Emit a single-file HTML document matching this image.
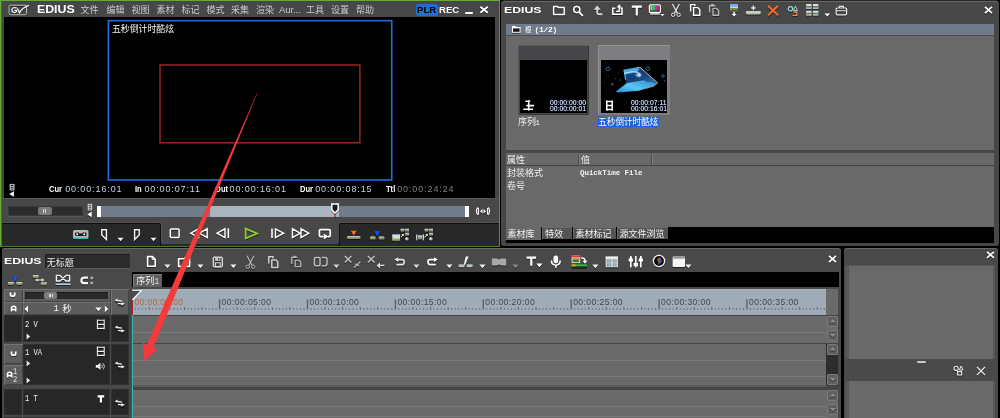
<!DOCTYPE html>
<html lang="zh">
<head>
<meta charset="utf-8">
<title>EDIUS</title>
<style>
html,body{margin:0;padding:0;background:#000;}
body{width:1000px;height:418px;position:relative;overflow:hidden;
 font-family:"Liberation Sans","Noto Sans CJK SC",sans-serif;font-size:11px;color:#e8e8e8;}
#root{position:absolute;left:0;top:0;width:1000px;height:418px;overflow:hidden;will-change:transform;}
.a{position:absolute;}
.t{position:absolute;white-space:nowrap;line-height:1;}
svg{position:absolute;overflow:visible;}
svg:not(.nf){filter:drop-shadow(0 1px 0 rgba(0,0,0,.5));}
/* ---------- player window ---------- */
#pl{left:0;top:0;width:500px;height:247px;background:#64ab36;}
#pl .frame{left:2px;top:1px;width:497px;height:245px;background:#474747;}
#pl .view{left:4px;top:17px;width:491px;height:181px;background:#000;}
#pl .sl{left:2px;top:198px;width:497px;height:25px;background:#484848;box-shadow:inset 0 1px 0 #565656;}
#pl .bt{left:2px;top:223px;width:497px;height:23px;background:#282828;}
.menu{top:5.6px;font-size:9px;color:#cacaca;}
.tc{top:184.7px;font-size:9px;color:#c9d3e6;letter-spacing:.88px;}
.tcl{top:185px;font-size:8.8px;color:#fff;font-weight:bold;transform:scaleX(.86);transform-origin:0 0;}
/* ---------- bin window ---------- */
#bin{left:0;top:0;}
#bin .bg{left:501px;top:1px;width:497.5px;height:245px;background:#474747;border-radius:4px 4px 3px 3px;box-shadow:inset 0 1px 0 #666, 0 -1px 0 #282828;}
.b9{font-size:9px;color:#f0f0f0;}
/* ---------- timeline window ---------- */
#tl{left:0;top:0;}
#tl .bg{left:2px;top:248.2px;width:839.2px;height:170px;background:#494949;border-radius:3px 3px 0 0;box-shadow:inset 0 1px 0 #686868;}
.hb{background:#5d5d5d;box-shadow:inset 1px 1px 0 #737373, inset -1px -1px 0 #454545;}
.tn{background:#272727;box-shadow:inset 0 0 0 1px #303030;}
.mono{font-family:"Liberation Mono",monospace;}
/* ---------- right panel ---------- */
#rp{left:0;top:0;}
#rp .bg{left:843.6px;top:248.4px;width:154.8px;height:170px;background:#494949;border-radius:3px 3px 0 0;box-shadow:inset 0 1px 0 #686868;}
</style>
</head>
<body>
<div id="root">

<!-- ================= PLAYER WINDOW ================= -->
<div id="pl" class="a">
 <div class="a" style="left:1px;top:1px;width:1px;height:245px;background:#4e6a38"></div>
 <div class="a" style="left:0;top:246px;width:500px;height:1px;background:#3f801f"></div>
 <div class="a" style="left:499px;top:1px;width:1px;height:246px;background:#4b9626"></div>
 <div class="a frame"></div>
 <div class="a view"></div>
 <div class="a sl"></div>
 <div class="a bt"></div>
 <div class="a" style="left:2px;top:222px;width:497px;height:1px;background:#525252"></div>
 <div class="a" style="left:160.6px;top:222px;width:178px;height:21.8px;background:#484848;border-radius:0 0 3.5px 3.5px;box-shadow:inset 1px 0 0 #565656"></div>
 <div class="a" style="left:2px;top:223px;width:159px;height:5px;background:#484848"></div>
 <div class="a" style="left:2px;top:223px;width:158.6px;height:23px;background:#282828;border-radius:0 3px 0 0;box-shadow:inset 0 1px 0 #0e0e0e, inset -1px 0 0 #111"></div>
 <div class="a" style="left:338px;top:223px;width:161px;height:5px;background:#484848"></div>
 <div class="a" style="left:338.6px;top:223px;width:160.4px;height:23px;background:#282828;border-radius:3px 0 0 0;box-shadow:inset 0 1px 0 #0e0e0e, inset 1px 0 0 #111"></div>

 <!-- title bar -->
 <svg style="left:7.8px;top:3.5px" width="22" height="12" viewBox="0 0 22 12">
  <rect x="1" y="1.2" width="17.5" height="9.6" rx="1.5" fill="none" stroke="#bdbdbd" stroke-width="1"/>
  <path d="M8.6 4.2 C7.6 3.2 4.2 3.2 3.8 6 C3.6 8.8 7.4 9 8.4 7.6 L8.4 6.4 L6.4 6.4" fill="none" stroke="#f2f2f2" stroke-width="1.3"/>
  <path d="M9.4 4.4 L11.4 8.8 C13.4 5.4 17 2.6 21 1.4" fill="none" stroke="#f2f2f2" stroke-width="1.3"/>
 </svg>
 <span class="t" style="left:36.6px;top:4.7px;font-size:10.1px;font-weight:bold;color:#fff;transform:scaleX(1.22);transform-origin:0 0">EDIUS</span>
 <span class="t menu" style="left:80.5px">文件</span>
 <span class="t menu" style="left:106.5px">编辑</span>
 <span class="t menu" style="left:131.5px">视图</span>
 <span class="t menu" style="left:156.5px">素材</span>
 <span class="t menu" style="left:181.5px">标记</span>
 <span class="t menu" style="left:206.5px">模式</span>
 <span class="t menu" style="left:231px">采集</span>
 <span class="t menu" style="left:256px">渲染</span>
 <span class="t menu" style="left:279px;top:5.1px;font-size:9.5px;letter-spacing:-.1px">Aur...</span>
 <span class="t menu" style="left:306px">工具</span>
 <span class="t menu" style="left:331px">设置</span>
 <span class="t menu" style="left:356px">帮助</span>
 <div class="a" style="left:416px;top:4px;width:22px;height:12px;background:#1d6be0;border-radius:2.5px"></div>
 <span class="t" style="left:417.3px;top:6.8px;font-size:8.2px;font-weight:bold;color:#000;transform:scaleX(1.17);transform-origin:0 0">PLR</span>
 <span class="t" style="left:439.3px;top:6.8px;font-size:8.2px;font-weight:bold;color:#fff;transform:scaleX(1.17);transform-origin:0 0">REC</span>
 <div class="a" style="left:465px;top:11.5px;width:7.5px;height:2.2px;background:#fff;border-radius:1px"></div>
 <svg style="left:479px;top:5px" width="10" height="9" viewBox="0 0 10 9"><path d="M1.4 1.8 L8.8 7.8 M8.8 1.8 L1.4 7.8" stroke="#fff" stroke-width="1.8" fill="none"/></svg>

 <!-- viewer overlays -->
 <svg class="nf" style="left:0;top:0" width="500" height="200" viewBox="0 0 500 200"><rect x="108.35" y="20.65" width="283.4" height="159.3" fill="none" stroke="#1f6fe4" stroke-width="1.6"/><rect x="160" y="64.95" width="199.9" height="77.85" fill="none" stroke="#962424" stroke-width="1.5"/></svg>
 <span class="t" style="left:112px;top:24.5px;font-size:8.9px;color:#f4f4f4">五秒倒计时酷炫</span>

 <!-- timecodes -->
 <svg style="left:7.6px;top:182.6px" width="8" height="15" viewBox="0 0 8 15">
  <path d="M2.2 1 V7.2 M6 1 V7.2 M2.2 1.4 H6 M2.2 3.4 H6 M2.2 5.2 H6 M2.2 7 H6" stroke="#e0e0e0" stroke-width=".9" fill="none"/>
  <path d="M5.9 8.2 V13.8 L1.2 11 Z" fill="#fff"/>
 </svg>
 <span class="t tcl" style="left:49.4px">Cur</span><span class="t tc" style="left:65.2px">00:00:16:01</span>
 <span class="t tcl" style="left:135px">In</span><span class="t tc" style="left:144.4px">00:00:07:11</span>
 <span class="t tcl" style="left:214.8px">Out</span><span class="t tc" style="left:229.6px">00:00:16:01</span>
 <span class="t tcl" style="left:299.8px">Dur</span><span class="t tc" style="left:315.2px">00:00:08:15</span>
 <span class="t tcl" style="left:386.4px">Ttl</span><span class="t tc" style="left:397.2px;color:#808080">00:00:24:24</span>

 <!-- slider row -->
 <div class="a" style="left:7.6px;top:205.6px;width:75.4px;height:10px;background:#2c2c2c;box-shadow:inset 0 0 0 1px #3a3a3a, 0 1px 0 #5a5a5a"></div>
 <div class="a" style="left:37.6px;top:206.6px;width:14.4px;height:8px;background:#7a7a7a;border-radius:2px"></div>
 <div class="a" style="left:43px;top:208.6px;width:1px;height:4px;background:#ddd"></div>
 <div class="a" style="left:45px;top:208.6px;width:1px;height:4px;background:#ddd"></div>
 <svg style="left:86.2px;top:203.2px" width="8" height="16" viewBox="0 0 8 16">
  <path d="M2.2 .8 V7.2 M5.6 .8 V7.2 M2.2 1.4 H5.6 M2.2 3.3 H5.6 M2.2 5.2 H5.6 M2.2 7 H5.6" stroke="#e4e4e4" stroke-width=".9" fill="none"/>
  <path d="M5.7 8.6 V14.2 L1.4 11.4 Z" fill="#fff"/>
 </svg>
 <div class="a" style="left:97px;top:206px;width:371px;height:11px;background:#717c8a"></div>
 <div class="a" style="left:209.6px;top:206px;width:129px;height:11px;background:#a9b4c1"></div>
 <div class="a" style="left:97px;top:206px;width:3.5px;height:11px;background:#fff"></div>
 <div class="a" style="left:465px;top:206px;width:3.5px;height:11px;background:#fff"></div>
 <svg style="left:330px;top:203px" width="10" height="15" viewBox="0 0 10 15">
  <path d="M1.8 .9 H8.2 V6.6 L5 10.2 L1.8 6.6 Z" fill="#1a1a1a" stroke="#fff" stroke-width="1.5"/>
  <path d="M5 10 V14" stroke="#d03030" stroke-width="1"/>
 </svg>
 <svg style="left:475px;top:206px" width="16" height="11" viewBox="0 0 16 11">
  <path d="M3 1.5 C1 3 1 7 3 9 M13 1.5 C15 3 15 7 13 9" stroke="#eee" stroke-width="1.4" fill="none"/>
  <path d="M3.5 2 V8.5 M12.5 2 V8.5" stroke="#eee" stroke-width="1"/>
  <path d="M5 5.2 L7.5 3 V7.4 Z M11 5.2 L8.5 3 V7.4 Z" fill="#fff"/>
 </svg>

 <!-- transport -->
 <svg style="left:72px;top:229px" width="18" height="12" viewBox="0 0 18 12">
  <rect x="1" y="1" width="15.5" height="8.6" rx="1.6" fill="#b8b8b8"/>
  <rect x="3" y="3.4" width="11.5" height="3.6" rx="1.2" fill="#1c1c1c"/>
  <rect x="7" y="3" width="3.4" height="1.4" fill="#b8b8b8"/><circle cx="5.2" cy="5.3" r="1" fill="#f4f4f4"/><circle cx="12.2" cy="5.3" r="1" fill="#f4f4f4"/>
  <rect x="1.4" y="8.6" width="14.8" height="1.5" fill="#17c4b0"/>
 </svg>
 <svg style="left:100px;top:228px" width="9" height="14" viewBox="0 0 9 14"><path d="M1.8 1.7 H6.4 V11.6 L1.8 7 Z" fill="none" stroke="#f4f4f4" stroke-width="1.4" stroke-linejoin="miter"/></svg>
 <svg style="left:117px;top:237px" width="7" height="5" viewBox="0 0 7 5"><path d="M.5 .8 H6.5 L3.5 4.2 Z" fill="#f4f4f4"/></svg>
 <svg style="left:132px;top:228px" width="9" height="14" viewBox="0 0 9 14"><path d="M7.2 1.7 H2.6 V11.6 L7.2 7 Z" fill="none" stroke="#f4f4f4" stroke-width="1.4" stroke-linejoin="miter"/></svg>
 <svg style="left:150px;top:237px" width="7" height="5" viewBox="0 0 7 5"><path d="M.5 .8 H6.5 L3.5 4.2 Z" fill="#f4f4f4"/></svg>

 <svg style="left:168px;top:227px" width="14" height="13" viewBox="0 0 14 13"><rect x="2.3" y="1.9" width="8.8" height="8.6" rx="1" fill="none" stroke="#fff" stroke-width="1.5"/></svg>
 <svg style="left:189px;top:227px" width="20" height="13" viewBox="0 0 20 13"><path d="M9.6 1.8 V10.6 L1.8 6.2 Z M18.2 1.8 V10.6 L10.4 6.2 Z" fill="none" stroke="#fff" stroke-width="1.4" stroke-linejoin="miter"/></svg>
 <svg style="left:215px;top:227px" width="16" height="13" viewBox="0 0 16 13"><path d="M10 1.8 V10.6 L2 6.2 Z" fill="none" stroke="#fff" stroke-width="1.4"/><path d="M13.3 1.4 V11" stroke="#fff" stroke-width="1.6"/></svg>
 <svg style="left:243px;top:226px" width="17" height="15" viewBox="0 0 17 15"><path d="M2.6 2.6 V12.4 L14 7.5 Z" fill="none" stroke="#8fd12c" stroke-width="1.7" stroke-linejoin="miter"/></svg>
 <svg style="left:269px;top:227px" width="17" height="13" viewBox="0 0 17 13"><path d="M6.4 1.8 V10.6 L14.6 6.2 Z" fill="none" stroke="#fff" stroke-width="1.4"/><path d="M3 1.4 V11" stroke="#fff" stroke-width="1.6"/></svg>
 <svg style="left:290px;top:227px" width="21" height="13" viewBox="0 0 21 13"><path d="M2.4 1.8 V10.6 L10.2 6.2 Z M11 1.8 V10.6 L18.8 6.2 Z" fill="none" stroke="#fff" stroke-width="1.4" stroke-linejoin="miter"/></svg>
 <svg style="left:317px;top:227px" width="16" height="14" viewBox="0 0 16 14">
  <path d="M6.6 9.6 H3.6 Q2.4 9.6 2.4 8.4 V3.8 Q2.4 2.6 3.6 2.6 H12 Q13.2 2.6 13.2 3.8 V8.4 Q13.2 9.6 12 9.6 H11" fill="none" stroke="#fff" stroke-width="1.7"/>
  <path d="M6.8 6.8 L11.6 9.6 L6.8 12.4 Z" fill="#fff"/>
 </svg>

 <svg style="left:346px;top:229px" width="16" height="12" viewBox="0 0 16 12">
  <path d="M4.9 1.8 H10.7 L7.8 6.8 Z" fill="#f2701e"/>
  <rect x=".8" y="7" width="13.8" height="3" rx="1.5" fill="#8e9058"/>
  <rect x="1.2" y="7" width="13" height="1.3" rx=".65" fill="#b4c4d4"/>
 </svg>
 <svg style="left:369px;top:229px" width="17" height="12" viewBox="0 0 17 12">
  <rect x=".8" y="7.4" width="6" height="3" rx="1.5" fill="#8e9058"/><rect x="1.2" y="7.4" width="5.2" height="1.2" rx=".6" fill="#b4c4d4"/>
  <rect x="9.4" y="7.4" width="6.2" height="3" rx="1.5" fill="#8e9058"/><rect x="9.8" y="7.4" width="5.4" height="1.2" rx=".6" fill="#b4c4d4"/>
  <path d="M5.5 2.2 H11.1 L8.3 7.6 Z" fill="#0a58ff"/>
 </svg>
 <svg style="left:392px;top:228px" width="18" height="14" viewBox="0 0 18 14">
  <rect x=".4" y="6.6" width="7.6" height="5.8" fill="#e4e6dc"/><rect x=".4" y="6.6" width="7.6" height="2.2" fill="#c4dcf4"/><rect x=".4" y="10.4" width="7.6" height="2" fill="#a4a25c"/>
  <g><rect x="8.6" y=".8" width="3.8" height="2.8" fill="#8c9050"/><rect x="8.6" y=".8" width="3.8" height="1.4" fill="#a8cce8"/><rect x="13.2" y=".8" width="3.8" height="2.8" fill="#8c9050"/><rect x="13.2" y=".8" width="3.8" height="1.4" fill="#a8cce8"/><rect x="13.2" y="4.8" width="3.8" height="2.8" fill="#8c9050"/><rect x="13.2" y="4.8" width="3.8" height="1.4" fill="#a8cce8"/></g>
  <path d="M9 9.2 L11 6.6 M9.8 6.4 H11.4 V8" stroke="#e4e4e4" stroke-width="1" fill="none"/>
  <path d="M13 10.8 H16.6 M14.8 9 V12.6" stroke="#e8e8e8" stroke-width="1.2"/>
 </svg>
 <svg style="left:415px;top:228px" width="19" height="14" viewBox="0 0 19 14">
  <rect x="2.8" y="7.4" width="4.6" height="4" fill="#8c9050"/><rect x="2.8" y="7.4" width="4.6" height="2" fill="#a8cce8"/>
  <path d="M2 6.4 Q.8 9.4 2 12.4 M8.2 6.4 Q9.4 9.4 8.2 12.4" stroke="#e4e4e4" stroke-width="1.1" fill="none"/>
  <g><rect x="9.6" y=".8" width="3.8" height="2.8" fill="#8c9050"/><rect x="9.6" y=".8" width="3.8" height="1.4" fill="#a8cce8"/><rect x="14.2" y=".8" width="3.8" height="2.8" fill="#8c9050"/><rect x="14.2" y=".8" width="3.8" height="1.4" fill="#a8cce8"/><rect x="14.2" y="4.8" width="3.8" height="2.8" fill="#8c9050"/><rect x="14.2" y="4.8" width="3.8" height="1.4" fill="#a8cce8"/></g>
  <path d="M10 9.2 L12 6.6 M10.8 6.4 H12.4 V8" stroke="#e4e4e4" stroke-width="1" fill="none"/>
  <path d="M14 10.8 H17.6 M15.8 9 V12.6" stroke="#e8e8e8" stroke-width="1.2"/>
 </svg>
</div>

<!-- ================= BIN WINDOW ================= -->
<div id="bin" class="a">
 <div class="a bg"></div>
 <!-- toolbar -->
 <span class="t" style="left:504.2px;top:5.1px;font-size:9.8px;font-weight:bold;color:#fff;transform:scaleX(1.25);transform-origin:0 0">EDIUS</span>
 <svg style="left:552px;top:4px" width="14" height="12" viewBox="0 0 14 12"><path d="M1.6 2.4 H5.4 L6.4 3.6 H12.2 V10.4 H1.6 Z" fill="none" stroke="#fff" stroke-width="1.5" stroke-linejoin="round"/></svg>
 <svg style="left:572px;top:5px" width="12" height="12" viewBox="0 0 12 12"><circle cx="4.8" cy="4.6" r="3.1" fill="none" stroke="#fff" stroke-width="1.5"/><path d="M7 7 L10.8 10.8" stroke="#fff" stroke-width="1.9"/></svg>
 <svg style="left:593px;top:5px" width="11" height="11" viewBox="0 0 11 11"><path d="M4.2 3 V7.4 Q4.2 9.2 6 9.2 H9.4" fill="none" stroke="#d4d4d4" stroke-width="1.9"/><path d="M.6 4.8 L4.2 .6 L7.8 4.8 Z" fill="#d4d4d4"/></svg>
 <svg style="left:611px;top:3px" width="13" height="13" viewBox="0 0 13 13"><path d="M4.4 5.2 H1.8 V11.2 H11 V5.2 H9.6" fill="none" stroke="#fff" stroke-width="1.5"/><path d="M5 8.4 H8.2 V3.6" fill="none" stroke="#fff" stroke-width="1.4"/><path d="M5.8 4.4 L8.2 1.2 L10.6 4.4 Z" fill="#fff"/></svg>
 <svg style="left:631px;top:5px" width="12" height="11" viewBox="0 0 12 11"><path d="M.8 1.6 H10.8 M5.8 1.6 V10.4" stroke="#fff" stroke-width="2.1" fill="none"/></svg>
 <svg style="left:648px;top:4px" width="18" height="14" viewBox="0 0 18 14">
  <rect x="1.4" y=".8" width="11" height="7.6" rx="1" fill="#2a2a2a" stroke="#fff" stroke-width="1.2"/>
  <rect x="2.4" y="1.6" width="1.8" height="4.8" fill="#d8d020"/><rect x="4.2" y="1.6" width="1.8" height="4.8" fill="#20c0d0"/><rect x="6" y="1.6" width="1.8" height="4.8" fill="#30c040"/><rect x="7.8" y="1.6" width="1.8" height="4.8" fill="#d030c0"/><rect x="9.6" y="1.6" width="1.8" height="4.8" fill="#d03030"/>
  <rect x="2.2" y="9.2" width="9.6" height="1.4" fill="#eee"/>
  <path d="M12.4 10 H16.4 L14.4 12.4 Z" fill="#fff"/>
 </svg>
 <svg style="left:669px;top:3px" width="14" height="15" viewBox="0 0 14 15"><path d="M3.4 1 L8.4 10.4 M10.4 1 L5.4 10.4" stroke="#e8e8e8" stroke-width="1.2" fill="none"/><circle cx="4.2" cy="11.8" r="1.7" fill="none" stroke="#e8e8e8" stroke-width="1"/><circle cx="9.6" cy="11.8" r="1.7" fill="none" stroke="#e8e8e8" stroke-width="1"/></svg>
 <svg style="left:689px;top:3px" width="13" height="14" viewBox="0 0 13 14"><path d="M1.6 8.6 V1.6 H5.8 V3.2" fill="none" stroke="#fff" stroke-width="1.4"/><path d="M4.6 4.6 H8.8 L10.8 6.8 V12.2 H4.6 Z" fill="none" stroke="#fff" stroke-width="1.4"/></svg>
 <svg style="left:708px;top:3px" width="13" height="14" viewBox="0 0 13 14"><path d="M1.6 9.4 V2.8 H7.4" fill="none" stroke="#b4b4b4" stroke-width="1.4"/><rect x="3" y="1" width="3" height="2.2" rx=".6" fill="#b4b4b4"/><path d="M5 5.4 H8.6 L10.6 7.4 V12.2 H5 Z" fill="none" stroke="#b4b4b4" stroke-width="1.4" stroke-linejoin="round"/></svg>
 <svg style="left:729px;top:3px" width="11" height="15" viewBox="0 0 11 15">
  <rect x="1.2" y="1.2" width="7.8" height="7.2" fill="#d8e8f6"/><rect x="1.2" y="1.2" width="7.8" height="2.4" fill="#6aa6ee"/><rect x="1.2" y="4.8" width="7.8" height="2.2" fill="#7c8a44"/><rect x="1.2" y="7" width="7.8" height="1.4" fill="#4c5a30"/>
  <path d="M5.1 9.6 V12" stroke="#fff" stroke-width="1.3"/><path d="M2.6 11 H7.6 L5.1 13.6 Z" fill="#fff"/><path d="M3.4 10.2 L5.1 8.8 L6.8 10.2 Z" fill="#fff"/>
 </svg>
 <svg style="left:745px;top:5px" width="17" height="11" viewBox="0 0 17 11">
  <path d="M8.4 .6 V5.2 M6.2 3 H10.6" stroke="#fff" stroke-width="1.3"/>
  <rect x=".8" y="6.2" width="15" height="3.4" rx="1.7" fill="#b8c0a0"/><rect x=".8" y="6.2" width="15" height="1.4" rx=".7" fill="#cfe0f0"/>
 </svg>
 <svg style="left:767px;top:5px" width="12" height="11" viewBox="0 0 12 11"><path d="M1 .8 L11 10.4 M11 .8 L1 10.4" stroke="#f46e28" stroke-width="2" fill="none"/></svg>
 <svg style="left:787px;top:5px" width="12" height="12" viewBox="0 0 12 12"><circle cx="3.4" cy="3.8" r="2.2" fill="none" stroke="#a8dede" stroke-width="1.2"/><path d="M6.4 5.4 L8.4 1 L10.4 5.4 Z" fill="none" stroke="#a8dede" stroke-width="1"/><path d="M6.4 7 H9.8 V10.4 H5.6" fill="none" stroke="#f08a50" stroke-width="1.3"/></svg>
 <svg style="left:805px;top:3px" width="15" height="14" viewBox="0 0 15 14">
  <g fill="#cfe0ee"><rect x="1.2" y="1" width="5.4" height="4.8"/><rect x="8" y="1" width="5.4" height="4.8"/><rect x="1.2" y="7.8" width="5.4" height="4.8"/><rect x="8" y="7.8" width="5.4" height="4.8"/></g>
  <g fill="#6a7a34"><rect x="1.2" y="3" width="5.4" height="1.6"/><rect x="8" y="3" width="5.4" height="1.6"/><rect x="1.2" y="9.8" width="5.4" height="1.6"/><rect x="8" y="9.8" width="5.4" height="1.6"/></g>
 </svg>
 <svg style="left:824px;top:13px" width="7" height="4" viewBox="0 0 7 4"><path d="M.4 .4 H6.2 L3.3 3.6 Z" fill="#fff"/></svg>
 <svg style="left:835px;top:5px" width="13" height="11" viewBox="0 0 13 11"><rect x="1.2" y="3" width="10.4" height="6.8" rx="1" fill="none" stroke="#e8e8e8" stroke-width="1.2"/><path d="M4.4 3 V1.4 H8.4 V3 M1.2 5.8 H11.6" fill="none" stroke="#e8e8e8" stroke-width="1.1"/></svg>
 <svg style="left:984px;top:5.5px" width="9" height="8" viewBox="0 0 9 8"><path d="M1 .8 L8 7.2 M8 .8 L1 7.2" stroke="#fff" stroke-width="1.7" fill="none"/></svg>

 <!-- folder header -->
 <div class="a" style="left:506px;top:24px;width:488px;height:11px;background:#6f7b8a"></div>
 <div class="a" style="left:506px;top:35px;width:488px;height:1px;background:#4b4d51"></div>
 <svg style="left:511px;top:25px" width="11" height="9" viewBox="0 0 11 9"><path d="M1 1 H4.4 L5.2 2 H9.6 V7.8 H1 Z" fill="#fff"/><rect x="2" y="3.4" width="6.6" height="3.4" fill="#1a1a1a"/></svg>
 <span class="t" style="left:525px;top:27px;font-size:6.5px;color:#fff">根</span>
 <span class="t" style="left:534.6px;top:26px;font-size:8px;color:#fff;font-family:'Liberation Mono',monospace;font-weight:bold;letter-spacing:-.35px">(1/2)</span>

 <!-- clip area -->
 <div class="a" style="left:506px;top:36px;width:488px;height:114px;background:#69696a"></div>
 <!-- thumb 1 -->
 <div class="a" style="left:518px;top:45px;width:71px;height:70px;background:#46464a;box-shadow:inset 0 1px 0 #5c5c60, inset 1px 0 0 #545458, inset -1px 0 0 #38383a, inset 0 -1px 0 #3a3a3c"></div>
 <div class="a" style="left:520px;top:60px;width:67px;height:53px;background:#000"></div>
 <svg class="nf" style="left:523px;top:100px" width="12" height="12" viewBox="0 0 12 12"><path d="M5.7 .2 V10.6" stroke="#fff" stroke-width="1.5"/><path d="M2.4 1.3 H7.2 M3.4 5.6 H11 M.3 9.3 H10" stroke="#fff" stroke-width="1.6" fill="none"/></svg>
 <span class="t" style="left:550.4px;top:98.5px;font-size:8px;color:#e6ecff;transform:scaleX(.852);transform-origin:0 0;text-shadow:0 0 1px #4a6ab0">00:00:00:00</span>
 <span class="t" style="left:550.4px;top:104.7px;font-size:8px;color:#e6ecff;transform:scaleX(.852);transform-origin:0 0;text-shadow:0 0 1px #4a6ab0">00:00:00:01</span>
 <span class="t b9" style="left:518px;top:118px">序列<span style="font-family:'Liberation Mono',monospace;font-size:8px;margin-left:-.8px;letter-spacing:-1px">1</span></span>
 <!-- thumb 2 -->
 <div class="a" style="left:597.5px;top:45px;width:72.5px;height:69.5px;background:#7e7e82;box-shadow:inset 1px 1px 0 #909094"></div>
 <div class="a" style="left:600.5px;top:60px;width:66.5px;height:52.5px;background:#000"></div>
 <svg class="nf" style="left:600.5px;top:60px" width="67" height="53" viewBox="0 0 67 53">
  <defs>
   <linearGradient id="cg" x1="0" y1="1" x2="1" y2="0"><stop offset="0" stop-color="#2a8cd8"/><stop offset=".45" stop-color="#58c6f6"/><stop offset="1" stop-color="#2a86cc"/></linearGradient>
   <linearGradient id="cg2" x1="0" y1="0" x2="1" y2="1"><stop offset="0" stop-color="#1a5a9c"/><stop offset=".5" stop-color="#123c74"/><stop offset="1" stop-color="#2a7cc0"/></linearGradient>
   <radialGradient id="gl" cx=".5" cy=".5" r=".5"><stop offset="0" stop-color="#fff" stop-opacity=".95"/><stop offset=".5" stop-color="#bfe6ff" stop-opacity=".5"/><stop offset="1" stop-color="#5ab0f0" stop-opacity="0"/></radialGradient>
   <filter id="bl" x="-20%" y="-20%" width="140%" height="140%"><feGaussianBlur stdDeviation=".55"/></filter>
  </defs>
  <g filter="url(#bl)">
   <polygon points="22.5,9.7 35.7,7.2 39.4,7.8 56.5,22.9 43.3,20.8 25.3,23.6 24.4,19" fill="url(#cg2)"/>
   <polygon points="14.9,31.6 25.3,23.6 43.3,20.8 56.5,22.9 53,25.9 37.8,30.8 17,32.6" fill="url(#cg)"/>
   <polygon points="22.6,9.8 35.5,7.4 38.4,9.2 36,12 24.2,14.6" fill="#52b4f0" opacity=".9"/><path d="M23,10 L24.6,19.6" stroke="#6cc8fa" stroke-width="1.1" opacity=".9"/>
   <path d="M23.4,13.6 Q30,10.6 36.8,12.4 Q40,14 38.6,16.6" stroke="#dff2ff" stroke-width="1.1" fill="none" opacity=".85"/>
   <ellipse cx="37.6" cy="15" rx="4.4" ry="3.2" fill="url(#gl)"/>
   <path d="M25.3,23.6 L43.3,20.8" stroke="#9adcff" stroke-width=".7" opacity=".8"/>
  </g>
  <path d="M36,7.2 L39.6,7.8 L56.8,23" stroke="#f2c8a8" stroke-width=".9" fill="none" opacity=".95"/>
  <path d="M56.8,23.2 L53,26 L45,28.6" stroke="#e8a070" stroke-width=".7" fill="none" opacity=".8"/>
  <g fill="none" stroke="#4878a8" stroke-width=".8"><ellipse cx="6.9" cy="9" rx="2.1" ry="1.6"/><ellipse cx="46.8" cy="8.8" rx="2" ry="1.7"/><circle cx="62" cy="16" r="1.3"/><circle cx="11.4" cy="24.3" r="1"/></g>
  <g fill="#3a5a8c"><circle cx="7" cy="16" r=".6"/><circle cx="14.5" cy="18.5" r=".6"/><circle cx="19" cy="20" r=".7"/><circle cx="4" cy="22" r=".5"/><circle cx="63.5" cy="21" r=".7"/><circle cx="17" cy="13" r=".5"/><circle cx="52" cy="27.6" r=".5"/></g>
 </svg>
 <svg style="left:604.6px;top:100px" width="10" height="12" viewBox="0 0 10 12"><path d="M1.8 .4 V10.8 M7.2 .4 V10.8" stroke="#fff" stroke-width="1.5"/><path d="M1.8 1.6 H7.2 M1.8 5.6 H7.2 M1.8 9.6 H7.2" stroke="#fff" stroke-width="1.5"/></svg>
 <span class="t" style="left:631.2px;top:98.5px;font-size:8px;color:#e6ecff;transform:scaleX(.852);transform-origin:0 0;text-shadow:0 0 1px #4a6ab0">00:00:07:11</span>
 <span class="t" style="left:631.2px;top:104.7px;font-size:8px;color:#e6ecff;transform:scaleX(.852);transform-origin:0 0;text-shadow:0 0 1px #4a6ab0">00:00:16:01</span>
 <div class="a" style="left:598px;top:117px;width:61px;height:10px;background:#1c62d8"></div>
 <span class="t b9" style="left:598.2px;top:117.8px;font-size:8.6px;color:#fff">五秒倒计时酷炫</span>

 <!-- properties -->
 <div class="a" style="left:506px;top:153px;width:488px;height:74px;background:#69696a"></div>
 <div class="a" style="left:506px;top:165px;width:488px;height:1px;background:#454545"></div>
 <div class="a" style="left:578px;top:154px;width:1px;height:11px;background:#4c4c4c"></div><div class="a" style="left:579px;top:154px;width:1px;height:11px;background:#808080"></div>
 <div class="a" style="left:651px;top:154px;width:1px;height:11px;background:#4c4c4c"></div><div class="a" style="left:652px;top:154px;width:1px;height:11px;background:#808080"></div>
 <span class="t b9" style="left:507px;top:155.5px">属性</span>
 <span class="t b9" style="left:581px;top:155.5px">值</span>
 <span class="t b9" style="left:507px;top:168.5px">封装格式</span>
 <span class="t" style="left:580px;top:169.5px;font-size:7.6px;color:#f2f2f2;font-family:'Liberation Mono',monospace;font-weight:bold;letter-spacing:-.1px">QuickTime File</span>
 <span class="t b9" style="left:507px;top:181.5px">卷号</span>

 <!-- tabs -->
 <div class="a" style="left:506px;top:227px;width:488px;height:16px;background:#000"></div>
 <div class="a" style="left:506px;top:227px;width:35px;height:13px;background:#696969"></div>
 <div class="a" style="left:542px;top:227px;width:30px;height:12px;background:#545454;box-shadow:inset 0 1px 0 #6a6a6a, inset 1px 0 0 #666"></div>
 <div class="a" style="left:573px;top:227px;width:42.5px;height:12px;background:#545454;box-shadow:inset 0 1px 0 #6a6a6a, inset 1px 0 0 #666"></div>
 <div class="a" style="left:617px;top:227px;width:51px;height:12px;background:#545454;box-shadow:inset 0 1px 0 #6a6a6a, inset 1px 0 0 #666"></div>
 <span class="t b9" style="left:507.5px;top:229.5px">素材库</span>
 <span class="t b9" style="left:545px;top:229.5px">特效</span>
 <span class="t b9" style="left:575.5px;top:229.5px">素材标记</span>
 <span class="t b9" style="left:619.5px;top:229.5px">源文件浏览</span>
</div>

<!-- ================= TIMELINE WINDOW ================= -->
<div id="tl" class="a">
 <div class="a bg"></div>
 <span class="t" style="left:4.4px;top:256px;font-size:9.8px;font-weight:bold;color:#fff;transform:scaleX(1.25);transform-origin:0 0">EDIUS</span>
 <div class="a" style="left:45px;top:254px;width:85.4px;height:13.6px;background:#2c2c2c;box-shadow:inset 1px 1px 0 #1e1e1e, 0 1px 0 #5a5a5a"></div>
 <span class="t" style="left:46.8px;top:259px;font-size:9px;color:#f0f0f0">无标题</span>
 <!-- main toolbar -->
 <svg style="left:146px;top:255px" width="11" height="13" viewBox="0 0 11 13"><path d="M1.6 1.6 H6.4 L9.2 4.4 V11.2 H1.6 Z" fill="none" stroke="#fff" stroke-width="1.6" stroke-linejoin="round"/><path d="M6.2 1.8 V4.6 H9" fill="none" stroke="#fff" stroke-width="1"/></svg>
 <svg style="left:164px;top:263.6px" width="7" height="5" viewBox="0 0 7 5"><path d="M.3 .5 H6.5 L3.4 4.3 Z" fill="#f0f0f0"/></svg>
 <svg style="left:176.5px;top:255.5px" width="15" height="12" viewBox="0 0 15 12"><path d="M1.6 2.8 H7.4 L8.4 1.6 H11.4 L12.6 2.8 V10.4 H1.6 Z" fill="none" stroke="#fff" stroke-width="1.6" stroke-linejoin="round"/></svg>
 <svg style="left:197px;top:263.6px" width="7" height="5" viewBox="0 0 7 5"><path d="M.3 .5 H6.5 L3.4 4.3 Z" fill="#f0f0f0"/></svg>
 <svg style="left:211.5px;top:255.5px" width="12" height="12" viewBox="0 0 12 12"><rect x="1.3" y="1.2" width="9" height="9.6" rx="1" fill="none" stroke="#d2d2d2" stroke-width="1.5"/><rect x="3.2" y="1.2" width="5.2" height="3.6" fill="#d2d2d2"/><rect x="5.9" y="1.9" width="1.4" height="2.2" fill="#4a4a4a"/><rect x="3.4" y="6.8" width="4.8" height="4" fill="none" stroke="#d2d2d2" stroke-width="1.1"/></svg>
 <svg style="left:229.8px;top:263.6px" width="7" height="5" viewBox="0 0 7 5"><path d="M.3 .5 H6.5 L3.4 4.3 Z" fill="#f0f0f0"/></svg>
 <svg style="left:243.5px;top:254.5px" width="13" height="15" viewBox="0 0 13 15"><path d="M3 .8 L8 10.4 M10 .8 L5 10.4" stroke="#b4b4b4" stroke-width="1.2" fill="none"/><circle cx="3.8" cy="11.8" r="1.7" fill="none" stroke="#b4b4b4" stroke-width="1"/><circle cx="9.2" cy="11.8" r="1.7" fill="none" stroke="#b4b4b4" stroke-width="1"/></svg>
 <svg style="left:267px;top:254.5px" width="13" height="14" viewBox="0 0 13 14"><path d="M1.8 8.6 V1.8 H6 V3.4" fill="none" stroke="#d0d0d0" stroke-width="1.5"/><path d="M4.8 5 H9 L10.8 7 V12.4 H4.8 Z" fill="none" stroke="#d0d0d0" stroke-width="1.5" stroke-linejoin="round"/></svg>
 <svg style="left:290px;top:254.5px" width="13" height="13" viewBox="0 0 13 13"><path d="M1.8 9 V2.4 H7.6" fill="none" stroke="#b0b0b0" stroke-width="1.4"/><rect x="3.2" y=".8" width="3" height="2" fill="#b0b0b0"/><path d="M5.2 5.4 H9 L10.8 7.2 V11.6 H5.2 Z" fill="none" stroke="#b0b0b0" stroke-width="1.4" stroke-linejoin="round"/></svg>
 <svg style="left:312.5px;top:256px" width="16" height="11" viewBox="0 0 16 11"><rect x="1.4" y="1.4" width="5.6" height="8.4" rx="1.2" fill="none" stroke="#bcbcbc" stroke-width="1.5"/><path d="M8.6 1.4 H12 Q14 1.4 14 3.4 V7.8 Q14 9.8 12 9.8 H8.6" fill="none" stroke="#bcbcbc" stroke-width="1.5"/></svg>
 <svg style="left:333px;top:263.6px" width="7" height="5" viewBox="0 0 7 5"><path d="M.3 .5 H6.5 L3.4 4.3 Z" fill="#d0d0d0"/></svg>
 <svg style="left:343.5px;top:254.5px" width="18" height="14" viewBox="0 0 18 14"><path d="M.8 .9 L7.4 7.6 M7.4 .9 L.8 7.6" stroke="#c4c4c4" stroke-width="1.4" fill="none"/><path d="M10 12.6 L16.4 6.6 M11.2 9 L15.2 10.6" stroke="#c0c0c0" stroke-width="1.3" fill="none"/></svg>
 <svg style="left:366.5px;top:254.5px" width="18" height="14" viewBox="0 0 18 14"><path d="M.8 .9 L7.6 7.6 M7.6 .9 L.8 7.6" stroke="#c4c4c4" stroke-width="1.4" fill="none"/><path d="M12 10.4 H17.4" stroke="#e0e0e0" stroke-width="1.4"/><path d="M9.6 10.4 L13 7.4 V13.4 Z" fill="#e0e0e0"/></svg>
 <svg style="left:394px;top:256.5px" width="12" height="10" viewBox="0 0 12 10"><path d="M3.6 2.6 H8.2 Q10.2 2.6 10.2 4.8 Q10.2 7.6 8.2 7.6 H2.4" fill="none" stroke="#e4e4e4" stroke-width="1.6"/><path d="M.4 2.6 L4.2 .2 V5 Z" fill="#e4e4e4"/></svg>
 <svg style="left:413px;top:263.6px" width="7" height="5" viewBox="0 0 7 5"><path d="M.3 .5 H6.5 L3.4 4.3 Z" fill="#d8d8d8"/></svg>
 <svg style="left:427px;top:256.5px" width="12" height="10" viewBox="0 0 12 10"><path d="M7.6 2.6 H3 Q1 2.6 1 4.8 Q1 7.6 3 7.6 H8.8" fill="none" stroke="#fff" stroke-width="1.7"/><path d="M10.8 2.6 L7 .2 V5 Z" fill="#fff"/></svg>
 <svg style="left:446px;top:263.6px" width="7" height="5" viewBox="0 0 7 5"><path d="M.3 .5 H6.5 L3.4 4.3 Z" fill="#f0f0f0"/></svg>
 <svg style="left:458px;top:255.5px" width="16" height="12" viewBox="0 0 16 12"><path d="M7.8 .4 H10.6 L7.2 8.8 H5.8 Z" fill="#fff"/><rect x=".6" y="8.6" width="6" height="2.6" rx="1" fill="#c0c4a8"/><rect x="8.6" y="8.6" width="6" height="2.6" rx="1" fill="#c0c4a8"/><rect x=".6" y="8.6" width="6" height="1.1" fill="#a8c4e0"/><rect x="8.6" y="8.6" width="6" height="1.1" fill="#a8c4e0"/></svg>
 <svg style="left:479px;top:263.6px" width="7" height="5" viewBox="0 0 7 5"><path d="M.3 .5 H6.5 L3.4 4.3 Z" fill="#f0f0f0"/></svg>
 <svg style="left:491px;top:258px" width="16" height="8" viewBox="0 0 16 8"><path d="M.8 .6 H5.8 L8 1.6 L10.2 .6 H15.2 V7.4 H10.2 L8 6.4 L5.8 7.4 H.8 Z" fill="#a8a8a8"/></svg>
 <svg style="left:512px;top:263.6px" width="7" height="5" viewBox="0 0 7 5"><path d="M.3 .5 H6.5 L3.4 4.3 Z" fill="#8a8a8a"/></svg>
 <svg style="left:526px;top:256px" width="11" height="10" viewBox="0 0 11 10"><path d="M.6 1.7 H10 M5.3 1.7 V9.8" stroke="#fff" stroke-width="2.2" fill="none"/></svg>
 <svg style="left:535.6px;top:263px" width="7" height="5" viewBox="0 0 7 5"><path d="M.3 .5 H6.5 L3.4 4.3 Z" fill="#fff"/></svg>
 <svg style="left:549.5px;top:254.5px" width="12" height="14" viewBox="0 0 12 14"><rect x="3.4" y=".6" width="4.8" height="7.8" rx="2.4" fill="#fff"/><path d="M1.4 5.6 Q1.4 10.2 5.8 10.2 Q10.2 10.2 10.2 5.6" fill="none" stroke="#fff" stroke-width="1.6"/><path d="M5.8 10.2 V12.8" stroke="#fff" stroke-width="1.7"/></svg>
 <svg style="left:570.5px;top:254.5px" width="17" height="14" viewBox="0 0 17 14">
  <rect x=".6" y=".6" width="8.6" height="7.6" fill="#f0f0f0"/><rect x=".6" y=".6" width="8.6" height="1.9" fill="#e23434"/><rect x="1.5" y="3.4" width="6.8" height="3.9" fill="#5c6a2c"/><rect x="1.5" y="3.4" width="6.8" height="1.2" fill="#a8b05c"/>
  <path d="M10.2 3.2 Q14 2.6 14 6" fill="none" stroke="#fff" stroke-width="1.6"/><path d="M11.4 5.8 H16.4 L14 8.8 Z" fill="#fff"/>
  <rect x=".6" y="9.4" width="15.4" height="2" fill="#2cc43a"/><rect x=".6" y="9.4" width="4" height="2" fill="#f09a2c"/><rect x=".6" y="11.8" width="15.4" height="1.3" fill="#2a2a2a"/>
 </svg>
 <svg style="left:591.6px;top:263.6px" width="7" height="5" viewBox="0 0 7 5"><path d="M.3 .5 H6.5 L3.4 4.3 Z" fill="#f0f0f0"/></svg>
 <svg style="left:604.5px;top:255.5px" width="14" height="12" viewBox="0 0 14 12"><rect x=".6" y=".6" width="12.4" height="10.6" fill="#d4d4d4"/><rect x=".6" y=".6" width="12.4" height="1.8" fill="#f2f2f2"/>
  <g fill="#7898b8"><rect x="2" y="3.6" width="4" height="2.8"/><rect x="7.6" y="3.6" width="4" height="2.8"/><rect x="2" y="7.4" width="4" height="2.8"/><rect x="7.6" y="7.4" width="4" height="2.8"/></g>
  <g fill="#d8d090"><rect x="3.2" y="4.4" width="1.6" height="1.2"/><rect x="8.8" y="4.4" width="1.6" height="1.2"/><rect x="3.2" y="8.2" width="1.6" height="1.2"/><rect x="8.8" y="8.2" width="1.6" height="1.2"/></g></svg>
 <svg style="left:628px;top:254.5px" width="16" height="14" viewBox="0 0 16 14"><path d="M2.8 1 V12.6 M7.8 1 V12.6 M12.8 1 V12.6" stroke="#fff" stroke-width="1.6"/><path d="M.6 4.4 L2.8 1 L5 4.4 V6.4 H.6 Z M5.6 8 H10 V11.2 H5.6 Z M10.6 4.4 L12.8 1 L15 4.4 V6.4 H10.6 Z" fill="#fff"/></svg>
 <svg style="left:652px;top:254px" width="14" height="14" viewBox="0 0 14 14"><circle cx="7" cy="7" r="5.6" fill="#0a0a0a" stroke="#f4f4f4" stroke-width="1.3"/><path d="M6.6 11 L5.4 5.4 L6.6 3.2 Z" fill="#30d848"/><path d="M6.6 11 L6.6 3.2 L7.8 3.4 Z" fill="#f03838"/><path d="M6.6 11 L7.8 3.4 L9 5 Z" fill="#f040e0"/><path d="M6.6 11 L9 5 L9.8 7.6 Z" fill="#4060ff"/></svg>
 <svg style="left:671.5px;top:255.5px" width="14" height="12" viewBox="0 0 14 12"><rect x=".6" y=".6" width="12.4" height="10.4" rx="1" fill="#f6f6f6"/><rect x=".6" y=".6" width="12.4" height="2.2" rx="1" fill="#9a9a9a"/></svg>
 <svg style="left:685.2px;top:263.6px" width="7" height="5" viewBox="0 0 7 5"><path d="M.3 .5 H6.5 L3.4 4.3 Z" fill="#f0f0f0"/></svg>
 <svg style="left:827.5px;top:255px" width="9" height="8" viewBox="0 0 9 8"><path d="M1 .8 L8 7.2 M8 .8 L1 7.2" stroke="#fff" stroke-width="1.7" fill="none"/></svg>

 <!-- mode buttons -->
 <svg style="left:7.2px;top:275.6px" width="17" height="11" viewBox="0 0 17 11"><path d="M5.4 .6 H10.8 L8.1 5.6 Z" fill="#0a58ff"/><rect x=".6" y="6" width="6.6" height="3" rx="1.4" fill="#8e9058"/><rect x="9" y="6" width="6.6" height="3" rx="1.4" fill="#8e9058"/><rect x="1" y="6" width="5.8" height="1.3" rx=".6" fill="#b4c8dc"/><rect x="9.4" y="6" width="5.8" height="1.3" rx=".6" fill="#b4c8dc"/></svg>
 <svg style="left:31.5px;top:274px" width="16" height="12" viewBox="0 0 16 12"><rect x=".6" y="1" width="6.4" height="3" rx="1.4" fill="#8e9058"/><rect x="1" y="1" width="5.6" height="1.3" rx=".6" fill="#b4c8dc"/><rect x="8.6" y="8.2" width="6.4" height="3" rx="1.4" fill="#8e9058"/><rect x="9" y="8.2" width="5.6" height="1.3" rx=".6" fill="#b4c8dc"/><path d="M4.4 6 H11" stroke="#e8e8e8" stroke-width="1.1"/><path d="M3 6 L5.6 4.2 V7.8 Z M12.4 6 L9.8 4.2 V7.8 Z" fill="#e8e8e8"/></svg>
 <svg style="left:54.5px;top:274px" width="17" height="12" viewBox="0 0 17 12"><path d="M1.4 1.4 H5 L11 7 H14.6 V1.4 H11 L5 7 H1.4 Z" fill="none" stroke="#f0f0f0" stroke-width="1.4" stroke-linejoin="round"/><rect x=".6" y="9.4" width="15" height="1.6" fill="#a8d0e8"/></svg>
 <svg style="left:79.5px;top:276px" width="15" height="9" viewBox="0 0 15 9"><path d="M8 1.6 H4.4 Q1.4 1.6 1.4 4.4 Q1.4 7.2 4.4 7.2 H8" fill="none" stroke="#f4f4f4" stroke-width="2.2"/><path d="M10 2 H13.6 M10 7 H13.6 M11.8 .4 V3.6 M11.8 5.4 V8.6" stroke="#c8c8c8" stroke-width="1"/></svg>

 <!-- sequence tab strip -->
 <div class="a" style="left:131.5px;top:272px;width:707.5px;height:15.4px;background:#000"></div>
 <div class="a" style="left:133px;top:273.6px;width:29px;height:13.8px;background:#606060;box-shadow:inset 1px 1px 0 #7c7c7c"></div>
 <span class="t" style="left:136.2px;top:277.2px;font-size:9px;color:#f4f4f4">序列<span class="mono" style="font-size:8.6px;color:#cfd8e8">1</span></span>

 <!-- header control rows -->
 <div class="a hb" style="left:4px;top:289px;width:18.5px;height:12.6px"></div>
 <div class="a hb" style="left:4px;top:302px;width:18.5px;height:12.6px"></div>
 <div class="a hb" style="left:23px;top:289px;width:87.5px;height:12.6px"></div>
 <div class="a hb" style="left:23px;top:302px;width:87.5px;height:12.6px"></div>
 <div class="a hb" style="left:111px;top:289px;width:18px;height:25.6px"></div>
 <svg style="left:9.4px;top:292.4px" width="8" height="6" viewBox="0 0 8 6"><path d="M1.5 .6 V2.4 Q1.5 4.2 3.6 4.2 Q5.7 4.2 5.7 2.4 V.6" fill="none" stroke="#fff" stroke-width="1.8"/></svg>
 <svg style="left:9.6px;top:304.8px" width="8" height="7" viewBox="0 0 8 7"><path d="M1.5 6.4 V3 Q1.5 1.4 3.6 1.4 Q5.7 1.4 5.7 3 V6.4 M1.5 4.6 H5.7" fill="none" stroke="#fff" stroke-width="1.6"/></svg>
 <div class="a" style="left:25px;top:291.6px;width:82.6px;height:7.8px;background:#2a2a2a;box-shadow:inset 1px 1px 0 #1c1c1c"></div>
 <div class="a" style="left:44.4px;top:292px;width:12.6px;height:6.8px;background:#7c7c7c;border-radius:1.8px"></div>
 <div class="a" style="left:48.8px;top:293.6px;width:.9px;height:3.6px;background:#e0e0e0"></div><div class="a" style="left:50.3px;top:293.6px;width:.9px;height:3.6px;background:#e0e0e0"></div><div class="a" style="left:51.8px;top:293.6px;width:.9px;height:3.6px;background:#e0e0e0"></div>
 <svg style="left:24px;top:304.8px" width="5" height="8" viewBox="0 0 5 8"><path d="M4 .6 V7.2 L.6 3.9 Z" fill="#fff"/></svg>
 <span class="t mono" style="left:53.6px;top:305.4px;font-size:9px;color:#f4f4f4">1</span>
 <span class="t" style="left:62.6px;top:305.2px;font-size:9px;color:#f4f4f4">秒</span>
 <svg style="left:94.6px;top:306.6px" width="7" height="5" viewBox="0 0 7 5"><path d="M.3 .5 H6.5 L3.4 4.3 Z" fill="#fff"/></svg>
 <svg style="left:104px;top:304.6px" width="5" height="8" viewBox="0 0 5 8"><path d="M.8 .6 V7.2 L4.2 3.9 Z" fill="#fff"/></svg>
 <svg style="left:114px;top:298.0px" width="12" height="9" viewBox="0 0 12 9"><g fill="#2c2c2c" stroke="#2c2c2c" transform="translate(0,1)"><path d="M.6 2.3 L3.6 .4 L3.5 3.5 Z M10.9 5.7 L7.6 4.3 L7.4 7.6 Z" stroke="none"/><path d="M3.2 2.3 L7.9 3.1 M4 5.3 L8 5.9" stroke-width="1.3" fill="none"/></g><g fill="#f0f0f0" stroke="#f0f0f0"><path d="M.6 2.3 L3.6 .4 L3.5 3.5 Z M10.9 5.7 L7.6 4.3 L7.4 7.6 Z" stroke="none"/><path d="M3.2 2.3 L7.9 3.1 M4 5.3 L8 5.9" stroke-width="1.2" fill="none"/></g></svg>

 <!-- track headers -->
 <div class="a tn" style="left:4px;top:315.4px;width:18px;height:27px"></div>
 <div class="a tn" style="left:23.2px;top:315.4px;width:86.8px;height:27px"></div>
 <div class="a tn" style="left:111.4px;top:315.4px;width:18px;height:27px"></div>
 <span class="t mono" style="left:24.8px;top:320.4px;font-size:9.4px;color:#f0f0f0;transform:scaleX(.76);transform-origin:0 0">2 V</span>
 <svg style="left:95.8px;top:318.6px" width="10" height="11" viewBox="0 0 10 11"><path d="M1.4 .5 V10.2 M8.2 .5 V10.2 M1.4 1.3 H8.2 M1.4 5.35 H8.2 M1.4 9.4 H8.2" stroke="#f0f0f0" stroke-width="1.1" fill="none"/></svg> <svg style="left:26px;top:332.6px" width="5" height="7" viewBox="0 0 5 7"><path d="M.6 .4 V6.4 L4.2 3.4 Z" fill="#f4f4f4"/></svg> <svg style="left:114px;top:324.6px" width="12" height="9" viewBox="0 0 12 9"><g fill="#2c2c2c" stroke="#2c2c2c" transform="translate(0,1)"><path d="M.6 2.3 L3.6 .4 L3.5 3.5 Z M10.9 5.7 L7.6 4.3 L7.4 7.6 Z" stroke="none"/><path d="M3.2 2.3 L7.9 3.1 M4 5.3 L8 5.9" stroke-width="1.3" fill="none"/></g><g fill="#f0f0f0" stroke="#f0f0f0"><path d="M.6 2.3 L3.6 .4 L3.5 3.5 Z M10.9 5.7 L7.6 4.3 L7.4 7.6 Z" stroke="none"/><path d="M3.2 2.3 L7.9 3.1 M4 5.3 L8 5.9" stroke-width="1.2" fill="none"/></g></svg>

 <div class="a hb" style="left:4px;top:344px;width:18.5px;height:20.4px"></div>
 <div class="a hb" style="left:4px;top:364.8px;width:18.5px;height:20.4px"></div>
 <div class="a tn" style="left:23.2px;top:344px;width:86.8px;height:41px"></div>
 <div class="a tn" style="left:111.4px;top:344px;width:18px;height:41px"></div>
 <svg style="left:9.8px;top:351.2px" width="8" height="6" viewBox="0 0 8 6"><path d="M1.5 .6 V2.4 Q1.5 4.2 3.6 4.2 Q5.7 4.2 5.7 2.4 V.6" fill="none" stroke="#fff" stroke-width="1.8"/></svg>
 <svg style="left:5.6px;top:371px" width="8" height="7" viewBox="0 0 8 7"><path d="M1.5 6.4 V3 Q1.5 1.3 3.6 1.3 Q5.7 1.3 5.7 3 V6.4 M1.5 4.6 H5.7" fill="none" stroke="#fff" stroke-width="1.6"/></svg>
 <span class="t mono" style="left:13px;top:368.2px;font-size:9px;color:#e0e0e0;transform:scaleX(.78);transform-origin:0 0">1</span>
 
 <span class="t mono" style="left:13px;top:375.8px;font-size:9px;color:#e0e0e0;transform:scaleX(.78);transform-origin:0 0">2</span>
 <span class="t mono" style="left:24.8px;top:347.6px;font-size:9.4px;color:#f0f0f0;transform:scaleX(.76);transform-origin:0 0">1 VA</span>
 <svg style="left:95.8px;top:346.2px" width="10" height="11" viewBox="0 0 10 11"><path d="M1.4 .5 V10.2 M8.2 .5 V10.2 M1.4 1.3 H8.2 M1.4 5.35 H8.2 M1.4 9.4 H8.2" stroke="#f0f0f0" stroke-width="1.1" fill="none"/></svg> <svg style="left:26px;top:360.4px" width="5" height="7" viewBox="0 0 5 7"><path d="M.6 .4 V6.4 L4.2 3.4 Z" fill="#f4f4f4"/></svg> <svg style="left:26px;top:377.2px" width="5" height="7" viewBox="0 0 5 7"><path d="M.6 .4 V6.4 L4.2 3.4 Z" fill="#f4f4f4"/></svg> <svg style="left:114px;top:360.6px" width="12" height="9" viewBox="0 0 12 9"><g fill="#2c2c2c" stroke="#2c2c2c" transform="translate(0,1)"><path d="M.6 2.3 L3.6 .4 L3.5 3.5 Z M10.9 5.7 L7.6 4.3 L7.4 7.6 Z" stroke="none"/><path d="M3.2 2.3 L7.9 3.1 M4 5.3 L8 5.9" stroke-width="1.3" fill="none"/></g><g fill="#f0f0f0" stroke="#f0f0f0"><path d="M.6 2.3 L3.6 .4 L3.5 3.5 Z M10.9 5.7 L7.6 4.3 L7.4 7.6 Z" stroke="none"/><path d="M3.2 2.3 L7.9 3.1 M4 5.3 L8 5.9" stroke-width="1.2" fill="none"/></g></svg>
 <svg style="left:95px;top:362.4px" width="11" height="9" viewBox="0 0 11 9"><path d="M.8 3 H2.8 L5.4 .8 V8 L2.8 5.8 H.8 Z" fill="#f4f4f4"/><path d="M6.8 2.6 Q8 4.4 6.8 6.2 M8.4 1.4 Q10.4 4.4 8.4 7.4" stroke="#e0e0e0" stroke-width=".9" fill="none"/></svg>

 <div class="a tn" style="left:4px;top:389.4px;width:18px;height:25.8px"></div>
 <div class="a tn" style="left:23.2px;top:389.4px;width:86.8px;height:25.8px"></div>
 <div class="a tn" style="left:111.4px;top:389.4px;width:18px;height:25.8px"></div>
 <div class="a tn" style="left:4px;top:417px;width:18px;height:1px"></div><div class="a tn" style="left:23.2px;top:417px;width:86.8px;height:1px"></div><div class="a tn" style="left:111.4px;top:417px;width:18px;height:1px"></div>
 <span class="t mono" style="left:24.8px;top:393.6px;font-size:9.4px;color:#f0f0f0;transform:scaleX(.76);transform-origin:0 0">1 T</span>
 <svg style="left:96.8px;top:394.6px" width="8" height="8" viewBox="0 0 8 8"><path d="M.6 1.4 H7.2 M3.9 1.4 V7.4" stroke="#fff" stroke-width="2.2" fill="none"/></svg>
 <svg style="left:114px;top:398.6px" width="12" height="9" viewBox="0 0 12 9"><g fill="#2c2c2c" stroke="#2c2c2c" transform="translate(0,1)"><path d="M.6 2.3 L3.6 .4 L3.5 3.5 Z M10.9 5.7 L7.6 4.3 L7.4 7.6 Z" stroke="none"/><path d="M3.2 2.3 L7.9 3.1 M4 5.3 L8 5.9" stroke-width="1.3" fill="none"/></g><g fill="#f0f0f0" stroke="#f0f0f0"><path d="M.6 2.3 L3.6 .4 L3.5 3.5 Z M10.9 5.7 L7.6 4.3 L7.4 7.6 Z" stroke="none"/><path d="M3.2 2.3 L7.9 3.1 M4 5.3 L8 5.9" stroke-width="1.2" fill="none"/></g></svg>

 <!-- ruler -->
 <div class="a" style="left:131.6px;top:289px;width:706.4px;height:26.4px;background:#6a6a6a"></div>
 <div class="a" style="left:131.6px;top:289px;width:694.4px;height:25.6px;background:#9fabb7;box-shadow:inset 0 1px 0 #a9b4be"></div>
 <svg class="nf" style="left:131.6px;top:288.6px" width="12" height="12" viewBox="0 0 12 12"><path d="M0 0 H11 L0 11.6 Z" fill="#4c4c4c"/><path d="M.2 1.2 H9.6 L.4 11" fill="none" stroke="#fff" stroke-width="1.2"/></svg>
 <div class="a" style="left:131.6px;top:300.4px;width:1.2px;height:14.2px;background:#a02828"></div>
 <svg class="nf" style="left:0;top:0" width="1000" height="418" viewBox="0 0 1000 418" font-family="Liberation Sans, sans-serif"><rect x="134.72" y="308" width="1" height="1.8" fill="#6a727c"/><rect x="138.23" y="308" width="1" height="1.8" fill="#6a727c"/><rect x="141.75" y="308" width="1" height="1.8" fill="#6a727c"/><rect x="145.26" y="308" width="1" height="1.8" fill="#6a727c"/><rect x="148.78" y="307" width="1" height="3" fill="#5c636c"/><rect x="152.30" y="308" width="1" height="1.8" fill="#6a727c"/><rect x="155.81" y="308" width="1" height="1.8" fill="#6a727c"/><rect x="159.33" y="308" width="1" height="1.8" fill="#6a727c"/><rect x="162.84" y="308" width="1" height="1.8" fill="#6a727c"/><rect x="166.36" y="307" width="1" height="3" fill="#5c636c"/><rect x="169.88" y="308" width="1" height="1.8" fill="#6a727c"/><rect x="173.39" y="308" width="1" height="1.8" fill="#6a727c"/><rect x="176.91" y="308" width="1" height="1.8" fill="#6a727c"/><rect x="180.42" y="308" width="1" height="1.8" fill="#6a727c"/><rect x="183.94" y="307" width="1" height="3" fill="#5c636c"/><rect x="187.46" y="308" width="1" height="1.8" fill="#6a727c"/><rect x="190.97" y="308" width="1" height="1.8" fill="#6a727c"/><rect x="194.49" y="308" width="1" height="1.8" fill="#6a727c"/><rect x="198.00" y="308" width="1" height="1.8" fill="#6a727c"/><rect x="201.52" y="307" width="1" height="3" fill="#5c636c"/><rect x="205.04" y="308" width="1" height="1.8" fill="#6a727c"/><rect x="208.55" y="308" width="1" height="1.8" fill="#6a727c"/><rect x="212.07" y="308" width="1" height="1.8" fill="#6a727c"/><rect x="215.58" y="308" width="1" height="1.8" fill="#6a727c"/><rect x="218.95" y="299.3" width="1.3" height="10.2" fill="#5a5f66"/><rect x="222.62" y="308" width="1" height="1.8" fill="#6a727c"/><rect x="226.13" y="308" width="1" height="1.8" fill="#6a727c"/><rect x="229.65" y="308" width="1" height="1.8" fill="#6a727c"/><rect x="233.16" y="308" width="1" height="1.8" fill="#6a727c"/><rect x="236.68" y="307" width="1" height="3" fill="#5c636c"/><rect x="240.20" y="308" width="1" height="1.8" fill="#6a727c"/><rect x="243.71" y="308" width="1" height="1.8" fill="#6a727c"/><rect x="247.23" y="308" width="1" height="1.8" fill="#6a727c"/><rect x="250.74" y="308" width="1" height="1.8" fill="#6a727c"/><rect x="254.26" y="307" width="1" height="3" fill="#5c636c"/><rect x="257.78" y="308" width="1" height="1.8" fill="#6a727c"/><rect x="261.29" y="308" width="1" height="1.8" fill="#6a727c"/><rect x="264.81" y="308" width="1" height="1.8" fill="#6a727c"/><rect x="268.32" y="308" width="1" height="1.8" fill="#6a727c"/><rect x="271.84" y="307" width="1" height="3" fill="#5c636c"/><rect x="275.36" y="308" width="1" height="1.8" fill="#6a727c"/><rect x="278.87" y="308" width="1" height="1.8" fill="#6a727c"/><rect x="282.39" y="308" width="1" height="1.8" fill="#6a727c"/><rect x="285.90" y="308" width="1" height="1.8" fill="#6a727c"/><rect x="289.42" y="307" width="1" height="3" fill="#5c636c"/><rect x="292.94" y="308" width="1" height="1.8" fill="#6a727c"/><rect x="296.45" y="308" width="1" height="1.8" fill="#6a727c"/><rect x="299.97" y="308" width="1" height="1.8" fill="#6a727c"/><rect x="303.48" y="308" width="1" height="1.8" fill="#6a727c"/><rect x="306.85" y="299.3" width="1.3" height="10.2" fill="#5a5f66"/><rect x="310.52" y="308" width="1" height="1.8" fill="#6a727c"/><rect x="314.03" y="308" width="1" height="1.8" fill="#6a727c"/><rect x="317.55" y="308" width="1" height="1.8" fill="#6a727c"/><rect x="321.06" y="308" width="1" height="1.8" fill="#6a727c"/><rect x="324.58" y="307" width="1" height="3" fill="#5c636c"/><rect x="328.10" y="308" width="1" height="1.8" fill="#6a727c"/><rect x="331.61" y="308" width="1" height="1.8" fill="#6a727c"/><rect x="335.13" y="308" width="1" height="1.8" fill="#6a727c"/><rect x="338.64" y="308" width="1" height="1.8" fill="#6a727c"/><rect x="342.16" y="307" width="1" height="3" fill="#5c636c"/><rect x="345.68" y="308" width="1" height="1.8" fill="#6a727c"/><rect x="349.19" y="308" width="1" height="1.8" fill="#6a727c"/><rect x="352.71" y="308" width="1" height="1.8" fill="#6a727c"/><rect x="356.22" y="308" width="1" height="1.8" fill="#6a727c"/><rect x="359.74" y="307" width="1" height="3" fill="#5c636c"/><rect x="363.26" y="308" width="1" height="1.8" fill="#6a727c"/><rect x="366.77" y="308" width="1" height="1.8" fill="#6a727c"/><rect x="370.29" y="308" width="1" height="1.8" fill="#6a727c"/><rect x="373.80" y="308" width="1" height="1.8" fill="#6a727c"/><rect x="377.32" y="307" width="1" height="3" fill="#5c636c"/><rect x="380.84" y="308" width="1" height="1.8" fill="#6a727c"/><rect x="384.35" y="308" width="1" height="1.8" fill="#6a727c"/><rect x="387.87" y="308" width="1" height="1.8" fill="#6a727c"/><rect x="391.38" y="308" width="1" height="1.8" fill="#6a727c"/><rect x="394.75" y="299.3" width="1.3" height="10.2" fill="#5a5f66"/><rect x="398.42" y="308" width="1" height="1.8" fill="#6a727c"/><rect x="401.93" y="308" width="1" height="1.8" fill="#6a727c"/><rect x="405.45" y="308" width="1" height="1.8" fill="#6a727c"/><rect x="408.96" y="308" width="1" height="1.8" fill="#6a727c"/><rect x="412.48" y="307" width="1" height="3" fill="#5c636c"/><rect x="416.00" y="308" width="1" height="1.8" fill="#6a727c"/><rect x="419.51" y="308" width="1" height="1.8" fill="#6a727c"/><rect x="423.03" y="308" width="1" height="1.8" fill="#6a727c"/><rect x="426.54" y="308" width="1" height="1.8" fill="#6a727c"/><rect x="430.06" y="307" width="1" height="3" fill="#5c636c"/><rect x="433.58" y="308" width="1" height="1.8" fill="#6a727c"/><rect x="437.09" y="308" width="1" height="1.8" fill="#6a727c"/><rect x="440.61" y="308" width="1" height="1.8" fill="#6a727c"/><rect x="444.12" y="308" width="1" height="1.8" fill="#6a727c"/><rect x="447.64" y="307" width="1" height="3" fill="#5c636c"/><rect x="451.16" y="308" width="1" height="1.8" fill="#6a727c"/><rect x="454.67" y="308" width="1" height="1.8" fill="#6a727c"/><rect x="458.19" y="308" width="1" height="1.8" fill="#6a727c"/><rect x="461.70" y="308" width="1" height="1.8" fill="#6a727c"/><rect x="465.22" y="307" width="1" height="3" fill="#5c636c"/><rect x="468.74" y="308" width="1" height="1.8" fill="#6a727c"/><rect x="472.25" y="308" width="1" height="1.8" fill="#6a727c"/><rect x="475.77" y="308" width="1" height="1.8" fill="#6a727c"/><rect x="479.28" y="308" width="1" height="1.8" fill="#6a727c"/><rect x="482.65" y="299.3" width="1.3" height="10.2" fill="#5a5f66"/><rect x="486.32" y="308" width="1" height="1.8" fill="#6a727c"/><rect x="489.83" y="308" width="1" height="1.8" fill="#6a727c"/><rect x="493.35" y="308" width="1" height="1.8" fill="#6a727c"/><rect x="496.86" y="308" width="1" height="1.8" fill="#6a727c"/><rect x="500.38" y="307" width="1" height="3" fill="#5c636c"/><rect x="503.90" y="308" width="1" height="1.8" fill="#6a727c"/><rect x="507.41" y="308" width="1" height="1.8" fill="#6a727c"/><rect x="510.93" y="308" width="1" height="1.8" fill="#6a727c"/><rect x="514.44" y="308" width="1" height="1.8" fill="#6a727c"/><rect x="517.96" y="307" width="1" height="3" fill="#5c636c"/><rect x="521.48" y="308" width="1" height="1.8" fill="#6a727c"/><rect x="524.99" y="308" width="1" height="1.8" fill="#6a727c"/><rect x="528.51" y="308" width="1" height="1.8" fill="#6a727c"/><rect x="532.02" y="308" width="1" height="1.8" fill="#6a727c"/><rect x="535.54" y="307" width="1" height="3" fill="#5c636c"/><rect x="539.06" y="308" width="1" height="1.8" fill="#6a727c"/><rect x="542.57" y="308" width="1" height="1.8" fill="#6a727c"/><rect x="546.09" y="308" width="1" height="1.8" fill="#6a727c"/><rect x="549.60" y="308" width="1" height="1.8" fill="#6a727c"/><rect x="553.12" y="307" width="1" height="3" fill="#5c636c"/><rect x="556.64" y="308" width="1" height="1.8" fill="#6a727c"/><rect x="560.15" y="308" width="1" height="1.8" fill="#6a727c"/><rect x="563.67" y="308" width="1" height="1.8" fill="#6a727c"/><rect x="567.18" y="308" width="1" height="1.8" fill="#6a727c"/><rect x="570.55" y="299.3" width="1.3" height="10.2" fill="#5a5f66"/><rect x="574.22" y="308" width="1" height="1.8" fill="#6a727c"/><rect x="577.73" y="308" width="1" height="1.8" fill="#6a727c"/><rect x="581.25" y="308" width="1" height="1.8" fill="#6a727c"/><rect x="584.76" y="308" width="1" height="1.8" fill="#6a727c"/><rect x="588.28" y="307" width="1" height="3" fill="#5c636c"/><rect x="591.80" y="308" width="1" height="1.8" fill="#6a727c"/><rect x="595.31" y="308" width="1" height="1.8" fill="#6a727c"/><rect x="598.83" y="308" width="1" height="1.8" fill="#6a727c"/><rect x="602.34" y="308" width="1" height="1.8" fill="#6a727c"/><rect x="605.86" y="307" width="1" height="3" fill="#5c636c"/><rect x="609.38" y="308" width="1" height="1.8" fill="#6a727c"/><rect x="612.89" y="308" width="1" height="1.8" fill="#6a727c"/><rect x="616.41" y="308" width="1" height="1.8" fill="#6a727c"/><rect x="619.92" y="308" width="1" height="1.8" fill="#6a727c"/><rect x="623.44" y="307" width="1" height="3" fill="#5c636c"/><rect x="626.96" y="308" width="1" height="1.8" fill="#6a727c"/><rect x="630.47" y="308" width="1" height="1.8" fill="#6a727c"/><rect x="633.99" y="308" width="1" height="1.8" fill="#6a727c"/><rect x="637.50" y="308" width="1" height="1.8" fill="#6a727c"/><rect x="641.02" y="307" width="1" height="3" fill="#5c636c"/><rect x="644.54" y="308" width="1" height="1.8" fill="#6a727c"/><rect x="648.05" y="308" width="1" height="1.8" fill="#6a727c"/><rect x="651.57" y="308" width="1" height="1.8" fill="#6a727c"/><rect x="655.08" y="308" width="1" height="1.8" fill="#6a727c"/><rect x="658.45" y="299.3" width="1.3" height="10.2" fill="#5a5f66"/><rect x="662.12" y="308" width="1" height="1.8" fill="#6a727c"/><rect x="665.63" y="308" width="1" height="1.8" fill="#6a727c"/><rect x="669.15" y="308" width="1" height="1.8" fill="#6a727c"/><rect x="672.66" y="308" width="1" height="1.8" fill="#6a727c"/><rect x="676.18" y="307" width="1" height="3" fill="#5c636c"/><rect x="679.70" y="308" width="1" height="1.8" fill="#6a727c"/><rect x="683.21" y="308" width="1" height="1.8" fill="#6a727c"/><rect x="686.73" y="308" width="1" height="1.8" fill="#6a727c"/><rect x="690.24" y="308" width="1" height="1.8" fill="#6a727c"/><rect x="693.76" y="307" width="1" height="3" fill="#5c636c"/><rect x="697.28" y="308" width="1" height="1.8" fill="#6a727c"/><rect x="700.79" y="308" width="1" height="1.8" fill="#6a727c"/><rect x="704.31" y="308" width="1" height="1.8" fill="#6a727c"/><rect x="707.82" y="308" width="1" height="1.8" fill="#6a727c"/><rect x="711.34" y="307" width="1" height="3" fill="#5c636c"/><rect x="714.86" y="308" width="1" height="1.8" fill="#6a727c"/><rect x="718.37" y="308" width="1" height="1.8" fill="#6a727c"/><rect x="721.89" y="308" width="1" height="1.8" fill="#6a727c"/><rect x="725.40" y="308" width="1" height="1.8" fill="#6a727c"/><rect x="728.92" y="307" width="1" height="3" fill="#5c636c"/><rect x="732.44" y="308" width="1" height="1.8" fill="#6a727c"/><rect x="735.95" y="308" width="1" height="1.8" fill="#6a727c"/><rect x="739.47" y="308" width="1" height="1.8" fill="#6a727c"/><rect x="742.98" y="308" width="1" height="1.8" fill="#6a727c"/><rect x="746.35" y="299.3" width="1.3" height="10.2" fill="#5a5f66"/><rect x="750.02" y="308" width="1" height="1.8" fill="#6a727c"/><rect x="753.53" y="308" width="1" height="1.8" fill="#6a727c"/><rect x="757.05" y="308" width="1" height="1.8" fill="#6a727c"/><rect x="760.56" y="308" width="1" height="1.8" fill="#6a727c"/><rect x="764.08" y="307" width="1" height="3" fill="#5c636c"/><rect x="767.60" y="308" width="1" height="1.8" fill="#6a727c"/><rect x="771.11" y="308" width="1" height="1.8" fill="#6a727c"/><rect x="774.63" y="308" width="1" height="1.8" fill="#6a727c"/><rect x="778.14" y="308" width="1" height="1.8" fill="#6a727c"/><rect x="781.66" y="307" width="1" height="3" fill="#5c636c"/><rect x="785.18" y="308" width="1" height="1.8" fill="#6a727c"/><rect x="788.69" y="308" width="1" height="1.8" fill="#6a727c"/><rect x="792.21" y="308" width="1" height="1.8" fill="#6a727c"/><rect x="795.72" y="308" width="1" height="1.8" fill="#6a727c"/><rect x="799.24" y="307" width="1" height="3" fill="#5c636c"/><rect x="802.76" y="308" width="1" height="1.8" fill="#6a727c"/><rect x="806.27" y="308" width="1" height="1.8" fill="#6a727c"/><rect x="809.79" y="308" width="1" height="1.8" fill="#6a727c"/><rect x="813.30" y="308" width="1" height="1.8" fill="#6a727c"/><rect x="816.82" y="307" width="1" height="3" fill="#5c636c"/><rect x="820.34" y="308" width="1" height="1.8" fill="#6a727c"/><rect x="823.85" y="308" width="1" height="1.8" fill="#6a727c"/><text x="134.6" y="305.2" font-size="8.6" fill="#b4683c" letter-spacing=".3">00:00:00:00</text><text x="221.6" y="305.2" font-size="8.6" fill="#43474d" letter-spacing=".4">00:00:05:00</text><text x="309.5" y="305.2" font-size="8.6" fill="#43474d" letter-spacing=".4">00:00:10:00</text><text x="397.4" y="305.2" font-size="8.6" fill="#43474d" letter-spacing=".4">00:00:15:00</text><text x="485.3" y="305.2" font-size="8.6" fill="#43474d" letter-spacing=".4">00:00:20:00</text><text x="573.2" y="305.2" font-size="8.6" fill="#43474d" letter-spacing=".4">00:00:25:00</text><text x="661.1" y="305.2" font-size="8.6" fill="#43474d" letter-spacing=".4">00:00:30:00</text><text x="749.0" y="305.2" font-size="8.6" fill="#43474d" letter-spacing=".4">00:00:35:00</text></svg>

 <!-- track lanes -->
 <div class="a" style="left:131.6px;top:314.6px;width:706.4px;height:104px;background:#454545"></div>
 <div class="a" style="left:131.6px;top:315.6px;width:694.6px;height:27px;background:#6a6a6a"></div>
 <div class="a" style="left:131.6px;top:332px;width:694.6px;height:1px;background:#7a7a7a"></div>
 <div class="a" style="left:131.6px;top:344.2px;width:694.6px;height:41px;background:#6a6a6a"></div>
 <div class="a" style="left:131.6px;top:359.6px;width:694.6px;height:1px;background:#7a7a7a"></div>
 <div class="a" style="left:131.6px;top:375.6px;width:694.6px;height:1px;background:#7a7a7a"></div>
 <div class="a" style="left:131.6px;top:385.2px;width:694.6px;height:2px;background:#5a5a5a"></div>
 <div class="a" style="left:131.6px;top:389.6px;width:694.6px;height:29px;background:#6a6a6a"></div>
 <div class="a" style="left:131.6px;top:406px;width:694.6px;height:1px;background:#7a7a7a"></div>
 <div class="a" style="left:131.6px;top:415.6px;width:694.6px;height:1px;background:#7a7a7a"></div>
 <div class="a" style="left:131.8px;top:315.4px;width:1.4px;height:103px;background:#3fb5ad"></div>
 <!-- scroll column -->
 <div class="a" style="left:826.2px;top:315.6px;width:12px;height:27px;background:#6a6a6a"></div>
 <div class="a" style="left:826.2px;top:344.2px;width:12px;height:41px;background:#2c2c2c"></div>
 <div class="a" style="left:826.2px;top:389.6px;width:12px;height:29px;background:#6a6a6a"></div>
 <div class="a" style="left:826.5px;top:316px;width:11.5px;height:11px;background:#5f5f5f;border-radius:2px;box-shadow:inset 0 0 0 1px #7a7a7a"></div><svg style="left:826.5px;top:316px" width="12" height="11" viewBox="0 0 12 11"><path d="M2.6 6.4 L5.8 3.2 L9 6.4 Z" fill="#8c8c8c"/></svg> <div class="a" style="left:826.5px;top:330.4px;width:11.5px;height:11px;background:#5f5f5f;border-radius:2px;box-shadow:inset 0 0 0 1px #7a7a7a"></div><svg style="left:826.5px;top:330.4px" width="12" height="11" viewBox="0 0 12 11"><path d="M2.6 4 L5.8 7.2 L9 4 Z" fill="#8c8c8c"/></svg> <div class="a" style="left:826.5px;top:344.2px;width:11.5px;height:11px;background:#5f5f5f;border-radius:2px;box-shadow:inset 0 0 0 1px #7a7a7a"></div><svg style="left:826.5px;top:344.2px" width="12" height="11" viewBox="0 0 12 11"><path d="M2.6 6.4 L5.8 3.2 L9 6.4 Z" fill="#8c8c8c"/></svg> <div class="a" style="left:826.5px;top:374.2px;width:11.5px;height:11px;background:#5f5f5f;border-radius:2px;box-shadow:inset 0 0 0 1px #7a7a7a"></div><svg style="left:826.5px;top:374.2px" width="12" height="11" viewBox="0 0 12 11"><path d="M2.6 4 L5.8 7.2 L9 4 Z" fill="#8c8c8c"/></svg> <div class="a" style="left:826.5px;top:390px;width:11.5px;height:11px;background:#5f5f5f;border-radius:2px;box-shadow:inset 0 0 0 1px #7a7a7a"></div><svg style="left:826.5px;top:390px" width="12" height="11" viewBox="0 0 12 11"><path d="M2.6 6.4 L5.8 3.2 L9 6.4 Z" fill="#8c8c8c"/></svg> <div class="a" style="left:826.5px;top:404.4px;width:11.5px;height:11px;background:#5f5f5f;border-radius:2px;box-shadow:inset 0 0 0 1px #7a7a7a"></div><svg style="left:826.5px;top:404.4px" width="12" height="11" viewBox="0 0 12 11"><path d="M2.6 4 L5.8 7.2 L9 4 Z" fill="#8c8c8c"/></svg>
</div>

<!-- ================= RIGHT PANEL ================= -->
<div id="rp" class="a">
 <div class="a bg"></div>
 <svg style="left:985.6px;top:251.4px" width="9" height="8" viewBox="0 0 9 8"><path d="M1 .8 L8 6.8 M8 .8 L1 6.8" stroke="#fff" stroke-width="1.7" fill="none"/></svg>
 <div class="a" style="left:845.4px;top:265.4px;width:150px;height:153px;background:#575757"></div><div class="a" style="left:845.4px;top:359px;width:150px;height:22px;background:#4a4a4a"></div><div class="a" style="left:849px;top:266.2px;width:144px;height:92.8px;background:#696969"></div>
 <div class="a" style="left:917px;top:361.4px;width:9px;height:1.8px;background:#c8c8c8;border-radius:1px"></div>
 <svg style="left:953px;top:365px" width="12" height="11" viewBox="0 0 12 11"><circle cx="3.2" cy="3.4" r="2.1" fill="none" stroke="#e8e8e8" stroke-width="1.1"/><path d="M6.4 5 L8.2 1 L10 5 Z" fill="none" stroke="#e8e8e8" stroke-width="1"/><path d="M4.6 6.6 H8.6 V10 H4.6 Z" fill="none" stroke="#e8e8e8" stroke-width="1.1"/></svg>
 <svg style="left:975.5px;top:365.6px" width="10" height="10" viewBox="0 0 10 10"><path d="M1 1 L9 9 M9 1 L1 9" stroke="#e4e4e4" stroke-width="1.3" fill="none"/></svg>
 <div class="a" style="left:849px;top:381.4px;width:144px;height:37px;background:#696969"></div>
</div>

<!-- red annotation arrow -->
<svg class="nf" style="left:0;top:0;z-index:50" width="1000" height="418" viewBox="0 0 1000 418"><polygon points="256.9,93.2 166.05,300 147,345.1 142.9,342.5 143.8,361.4 157.3,349.5 153.05,347.6 173.15,300 257.25,93.2" fill="#f43a3a"/></svg>

</div>
</body>
</html>
